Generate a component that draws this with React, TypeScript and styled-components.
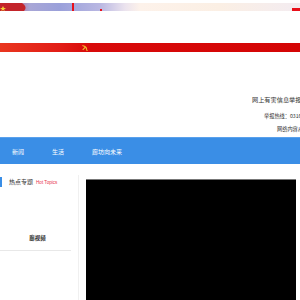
import React from 'react';
import styled, { createGlobalStyle } from 'styled-components';

const GlobalStyle = createGlobalStyle`
  html, body {
    margin: 0;
    padding: 0;
    background: #ffffff;
    font-family: "Noto Sans CJK SC", "Liberation Sans", sans-serif;
  }
`;

const navItems = ['新闻', '生活', '廊坊向未来'];

const App: React.FC = () => {
  return (
    <Page>
      <GlobalStyle />
      <Banner>
        <TopStrip>
          <FlagLeft viewBox="0 0 28 8" preserveAspectRatio="none">
            <path d="M0 0 H22 Q28 4 24 8 H0 Z" fill="#c3242a" />
            <path d="M2 5 L3 3 L4 5 L6 5 L4 6.5 L5 8 L3 7 L1 8 L2 6.5 L0 5 Z" fill="#f5d03a" />
          </FlagLeft>
          <Mark $left={72} $top={0} $h={8} />
          <Mark $left={100} $top={6} $h={2} />
          <Mark $left={292} $top={5} $h={3} $w={8} />
        </TopStrip>
        <RedBand>
          <Sickle viewBox="0 0 10 8">
            <path d="M2 1 Q8 1 8 6 L9 7 L7 7 Q7 3 3 2 Z" fill="#f3c22e" />
            <path d="M3 6 L6 3" stroke="#f3c22e" strokeWidth="1.2" />
          </Sickle>
        </RedBand>
      </Banner>

      <InfoArea>
        <InfoLine $indent={252} $size={6.2} $gap={7}>网上有害信息举报专区</InfoLine>
        <InfoLine $indent={264} $size={5.2} $gap={4}>举报热线：0316</InfoLine>
        <InfoLine $indent={277} $size={5.2}>网络内容从</InfoLine>
      </InfoArea>

      <NavBar>
        {navItems.map((item) => (
          <NavItem key={item}>{item}</NavItem>
        ))}
      </NavBar>

      <Main>
        <SideColumn>
          <SectionTitle>
            热点专题
            <SectionSub>Hot Topics</SectionSub>
          </SectionTitle>
          <VideoLabel>廊视频</VideoLabel>
          <SideRule />
        </SideColumn>
        <VideoBox />
      </Main>
    </Page>
  );
};

export default App;

const Page = styled.div`
  width: 300px;
  height: 300px;
  overflow: hidden;
  background: #ffffff;
`;

const Banner = styled.div`
  display: flex;
  flex-direction: column;
  padding-top: 3px;
`;

const TopStrip = styled.div`
  position: relative;
  height: 8px;
  background: linear-gradient(
    90deg,
    #c9394a 0px,
    #a8a6d6 30px,
    #9aa0da 60px,
    #b9b7e2 100px,
    #ebe3ee 125px,
    #fdf2ea 140px,
    #fbefe4 220px,
    #f4ecef 290px
  );
`;

const FlagLeft = styled.svg`
  position: absolute;
  left: 0;
  top: 0;
  width: 28px;
  height: 8px;
`;

const Mark = styled.div<{ $left: number; $top: number; $h: number; $w?: number }>`
  position: absolute;
  left: ${(p) => p.$left}px;
  top: ${(p) => p.$top}px;
  width: ${(p) => p.$w ?? 2}px;
  height: ${(p) => p.$h}px;
  background: #e8101a;
`;

const RedBand = styled.div`
  position: relative;
  margin-top: 32px;
  height: 9px;
  background: linear-gradient(90deg, #e9361f 0px, #e21d16 60px, #d80a0a 90px, #d40505 300px);
`;

const Sickle = styled.svg`
  position: absolute;
  left: 80px;
  top: 1px;
  width: 9px;
  height: 8px;
`;

const InfoArea = styled.div`
  height: 85px;
  display: flex;
  flex-direction: column;
  justify-content: flex-end;
  padding-bottom: 4px;
  box-sizing: border-box;
  overflow: hidden;
`;

const InfoLine = styled.div<{ $indent: number; $size: number; $gap?: number }>`
  padding-left: ${(p) => p.$indent}px;
  margin-bottom: ${(p) => p.$gap ?? 0}px;
  font-size: ${(p) => p.$size}px;
  line-height: ${(p) => p.$size * 1.6}px;
  color: #333333;
  white-space: nowrap;
`;

const NavBar = styled.div`
  display: flex;
  align-items: center;
  height: 26px;
  padding-left: 12px;
  gap: 28px;
  background: #3a8ee6;
  border-top: 1px solid #5aa1ec;
`;

const NavItem = styled.div`
  font-size: 6px;
  color: #ffffff;
  white-space: nowrap;
`;

const Main = styled.div`
  display: flex;
  align-items: flex-start;
  padding-top: 11px;
`;

const SideColumn = styled.div`
  width: 79px;
  height: 140px;
  border-right: 1px solid #f0f0f0;
  box-sizing: border-box;
  padding-right: 7px;
  padding-top: 2px;
  display: flex;
  flex-direction: column;
`;

const SectionTitle = styled.div`
  display: flex;
  align-items: baseline;
  gap: 3px;
  height: 10px;
  line-height: 10px;
  padding-left: 7px;
  border-left: 2px solid #3a8ee6;
  font-size: 6px;
  color: #333333;
`;

const SectionSub = styled.span`
  font-family: "Liberation Sans", sans-serif;
  font-size: 4.6px;
  color: #e8324a;
`;

const VideoLabel = styled.div`
  margin-top: 47px;
  text-align: center;
  padding-left: 4px;
  font-size: 5.5px;
  font-weight: bold;
  color: #333333;
`;

const SideRule = styled.div`
  margin-top: 8px;
  height: 1px;
  background: #e8e8e8;
`;

const VideoBox = styled.div`
  margin-left: 7px;
  margin-top: 4px;
  width: 210px;
  height: 130px;
  background: #000000;
  border-top: 1px solid #777777;
`;
